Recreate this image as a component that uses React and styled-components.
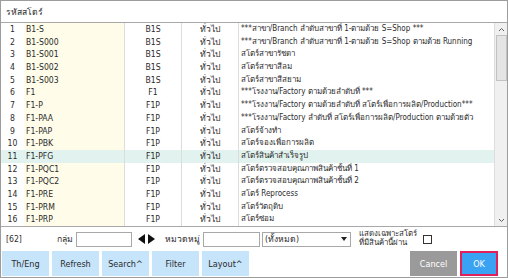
import React from 'react';
import styled, { createGlobalStyle } from 'styled-components';

const GlobalStyle = createGlobalStyle`
  html, body {
    margin: 0;
    padding: 0;
    background: #ffffff;
    overflow: hidden;
  }
  * {
    box-sizing: border-box;
  }
`;

const FONT = `"DejaVu Sans Condensed", "DejaVu Sans", "Liberation Sans", sans-serif`;

const rows = [
  ['B1-S', 'B1S', '***สาขา/Branch ลำดับสาขาที่ 1-ตามด้วย S=Shop ***'],
  ['B1-S000', 'B1S', '***สาขา/Branch ลำดับสาขาที่ 1-ตามด้วย S=Shop ตามด้วย Running'],
  ['B1-S001', 'B1S', 'สโตร์สาขารัชดา'],
  ['B1-S002', 'B1S', 'สโตร์สาขาสีลม'],
  ['B1-S003', 'B1S', 'สโตร์สาขาสีสยาม'],
  ['F1', 'F1', '***โรงงาน/Factory ตามด้วยลำดับที่ ***'],
  ['F1-P', 'F1P', '***โรงงาน/Factory ตามด้วยลำดับที่ สโตร์เพื่อการผลิต/Production***'],
  ['F1-PAA', 'F1P', '***โรงงาน/Factory ลำดับที่ สโตร์เพื่อการผลิต/Production ตามด้วยตัว'],
  ['F1-PAP', 'F1P', 'สโตร์จ้างทำ'],
  ['F1-PBK', 'F1P', 'สโตร์จองเพื่อการผลิต'],
  ['F1-PFG', 'F1P', 'สโตร์สินค้าสำเร็จรูป'],
  ['F1-PQC1', 'F1P', 'สโตร์ตรวจสอบคุณภาพสินค้าชั้นที่ 1'],
  ['F1-PQC2', 'F1P', 'สโตร์ตรวจสอบคุณภาพสินค้าชั้นที่ 2'],
  ['F1-PRE', 'F1P', 'สโตร์ Reprocess'],
  ['F1-PRM', 'F1P', 'สโตร์วัตถุดิบ'],
  ['F1-PRP', 'F1P', 'สโตร์ซ่อม'],
];

const Window = styled.div`
  width: 508px;
  height: 278px;
  border: 1px solid #9c9c9c;
  background: #ffffff;
  display: flex;
  flex-direction: column;
  font-family: ${FONT};
  color: #2b2b2b;
  overflow: hidden;
`;

const TitleBar = styled.div`
  height: 22px;
  border-bottom: 1px solid #a8a8a8;
  display: flex;
  align-items: center;
  padding-left: 5px;
  font-size: 8.6px;
  color: #2b2b2b;
`;

const GridWrap = styled.div`
  height: 204px;
  display: flex;
  border-bottom: 1px solid #a8a8a8;
`;

const Table = styled.div`
  flex: 1;
  display: flex;
  flex-direction: column;
  overflow: hidden;
`;

const Row = styled.div`
  height: 12.6875px;
  display: grid;
  grid-template-columns: 23px 101px 57px 57px 1fr;
  background: ${(p) => (p.$highlight ? '#e2f3ef' : 'transparent')};
  font-size: 8.6px;
  line-height: 12.6875px;
`;

const Cell = styled.div`
  white-space: nowrap;
  overflow: hidden;
  text-align: ${(p) => p.$align || 'left'};
  padding-left: ${(p) => (p.$align === 'center' ? '0' : '2px')};
  font-size: ${(p) => (p.$small ? '8px' : 'inherit')};
  background: ${(p) => (p.$yellow ? (p.$highlight ? '#e2f3ef' : '#fffdea') : 'transparent')};
  border-right: ${(p) => (p.$line ? '1px solid #dcdcdc' : 'none')};
`;

const Scrollbar = styled.div`
  width: 13px;
  background: #f0f0f0;
  border-left: 1px solid #dedede;
  display: flex;
  flex-direction: column;
  align-items: center;
`;

const ScrollArrow = styled.div`
  height: 12px;
  width: 100%;
  display: flex;
  align-items: center;
  justify-content: center;
`;

const Thumb = styled.div`
  width: 11px;
  height: 46px;
  background: #e4e4e4;
  border: 1px solid #c2c2c2;
`;

const FilterBar = styled.div`
  height: 24px;
  display: flex;
  align-items: center;
  font-size: 8.6px;
  padding-left: 5px;
`;

const Count = styled.span`
  width: 51px;
`;

const FieldLabel = styled.span`
  margin-right: 3px;
`;

const TextInput = styled.div`
  width: ${(p) => p.$w}px;
  height: 15px;
  border: 1px solid #a8a8a8;
  background: #fff;
`;

const NavArrows = styled.div`
  display: flex;
  align-items: center;
  gap: 3px;
  margin: 0 10px 0 6px;
`;

const Select = styled.div`
  width: 89px;
  height: 15px;
  margin-left: 2px;
  border: 1px solid #a8a8a8;
  display: flex;
  align-items: center;
  justify-content: space-between;
  padding: 0 3px 0 2px;
  font-size: 8.6px;
`;

const CheckText = styled.div`
  margin-left: 8px;
  font-size: 7.8px;
  line-height: 8.6px;
  width: 60px;
  white-space: nowrap;
`;

const CheckBox = styled.div`
  width: 9px;
  height: 9px;
  border: 1px solid #333;
  margin-left: 4px;
`;

const ButtonBar = styled.div`
  height: 26px;
  display: flex;
  align-items: flex-start;
  padding-left: 1px;
  gap: 3px;
`;

const Spacer = styled.div`
  flex: 1;
`;

const ActionButton = styled.div`
  height: 25px;
  width: ${(p) => p.$w || 47}px;
  display: flex;
  align-items: center;
  justify-content: center;
  font-size: 9px;
  background: ${(p) =>
    p.$variant === 'cancel' ? '#9a9a9a' : p.$variant === 'ok' ? '#3aa2f2' : '#c6e4fa'};
  color: ${(p) => (p.$variant ? '#ffffff' : '#2b2b2b')};
  border: ${(p) => (p.$variant === 'ok' ? '2px solid #e0205a' : 'none')};
  margin-right: ${(p) => p.$mr || 0}px;
`;

function Chevron({ down }) {
  return (
    <svg width="7" height="5" viewBox="0 0 7 5">
      <path
        d={down ? 'M1 1 L3.5 3.5 L6 1' : 'M1 4 L3.5 1.5 L6 4'}
        fill="none"
        stroke="#606060"
        strokeWidth="1"
      />
    </svg>
  );
}

function Triangle({ dir }) {
  return (
    <svg width="7" height="10" viewBox="0 0 7 10">
      <path d={dir === 'left' ? 'M7 0 L0 5 L7 10 Z' : 'M0 0 L7 5 L0 10 Z'} fill="#111" />
    </svg>
  );
}

export default function App() {
  return (
    <>
      <GlobalStyle />
      <Window>
        <TitleBar>รหัสสโตร์</TitleBar>

        <GridWrap>
          <Table>
            {rows.map((r, i) => {
              const hl = i === 10;
              return (
                <Row key={r[0]} $highlight={hl}>
                  <Cell $align="center">{i + 1}</Cell>
                  <Cell $yellow $highlight={hl} $line>
                    {r[0]}
                  </Cell>
                  <Cell $align="center" $line>
                    {r[1]}
                  </Cell>
                  <Cell $align="center" $line>
                    ทั่วไป
                  </Cell>
                  <Cell $small>{r[2]}</Cell>
                </Row>
              );
            })}
          </Table>
          <Scrollbar>
            <ScrollArrow>
              <Chevron />
            </ScrollArrow>
            <Thumb />
            <Spacer />
            <ScrollArrow>
              <Chevron down />
            </ScrollArrow>
          </Scrollbar>
        </GridWrap>

        <FilterBar>
          <Count>[62]</Count>
          <FieldLabel>กลุ่ม</FieldLabel>
          <TextInput $w={56} />
          <NavArrows>
            <Triangle dir="left" />
            <Triangle dir="right" />
          </NavArrows>
          <FieldLabel>หมวดหมู่</FieldLabel>
          <TextInput $w={57} />
          <Select>
            <span>(ทั้งหมด)</span>
            <svg width="6" height="4" viewBox="0 0 6 4">
              <path d="M0 0 L6 0 L3 4 Z" fill="#222" />
            </svg>
          </Select>
          <CheckText>
            แสดงเฉพาะสโตร์
            <br />
            ที่มีสินค้านี้ผ่าน
          </CheckText>
          <CheckBox />
        </FilterBar>

        <ButtonBar>
          <ActionButton>Th/Eng</ActionButton>
          <ActionButton>Refresh</ActionButton>
          <ActionButton>Search^</ActionButton>
          <ActionButton>Filter</ActionButton>
          <ActionButton>Layout^</ActionButton>
          <Spacer />
          <ActionButton $variant="cancel">Cancel</ActionButton>
          <ActionButton $variant="ok" $w={38} $mr={9}>
            OK
          </ActionButton>
        </ButtonBar>
      </Window>
    </>
  );
}
